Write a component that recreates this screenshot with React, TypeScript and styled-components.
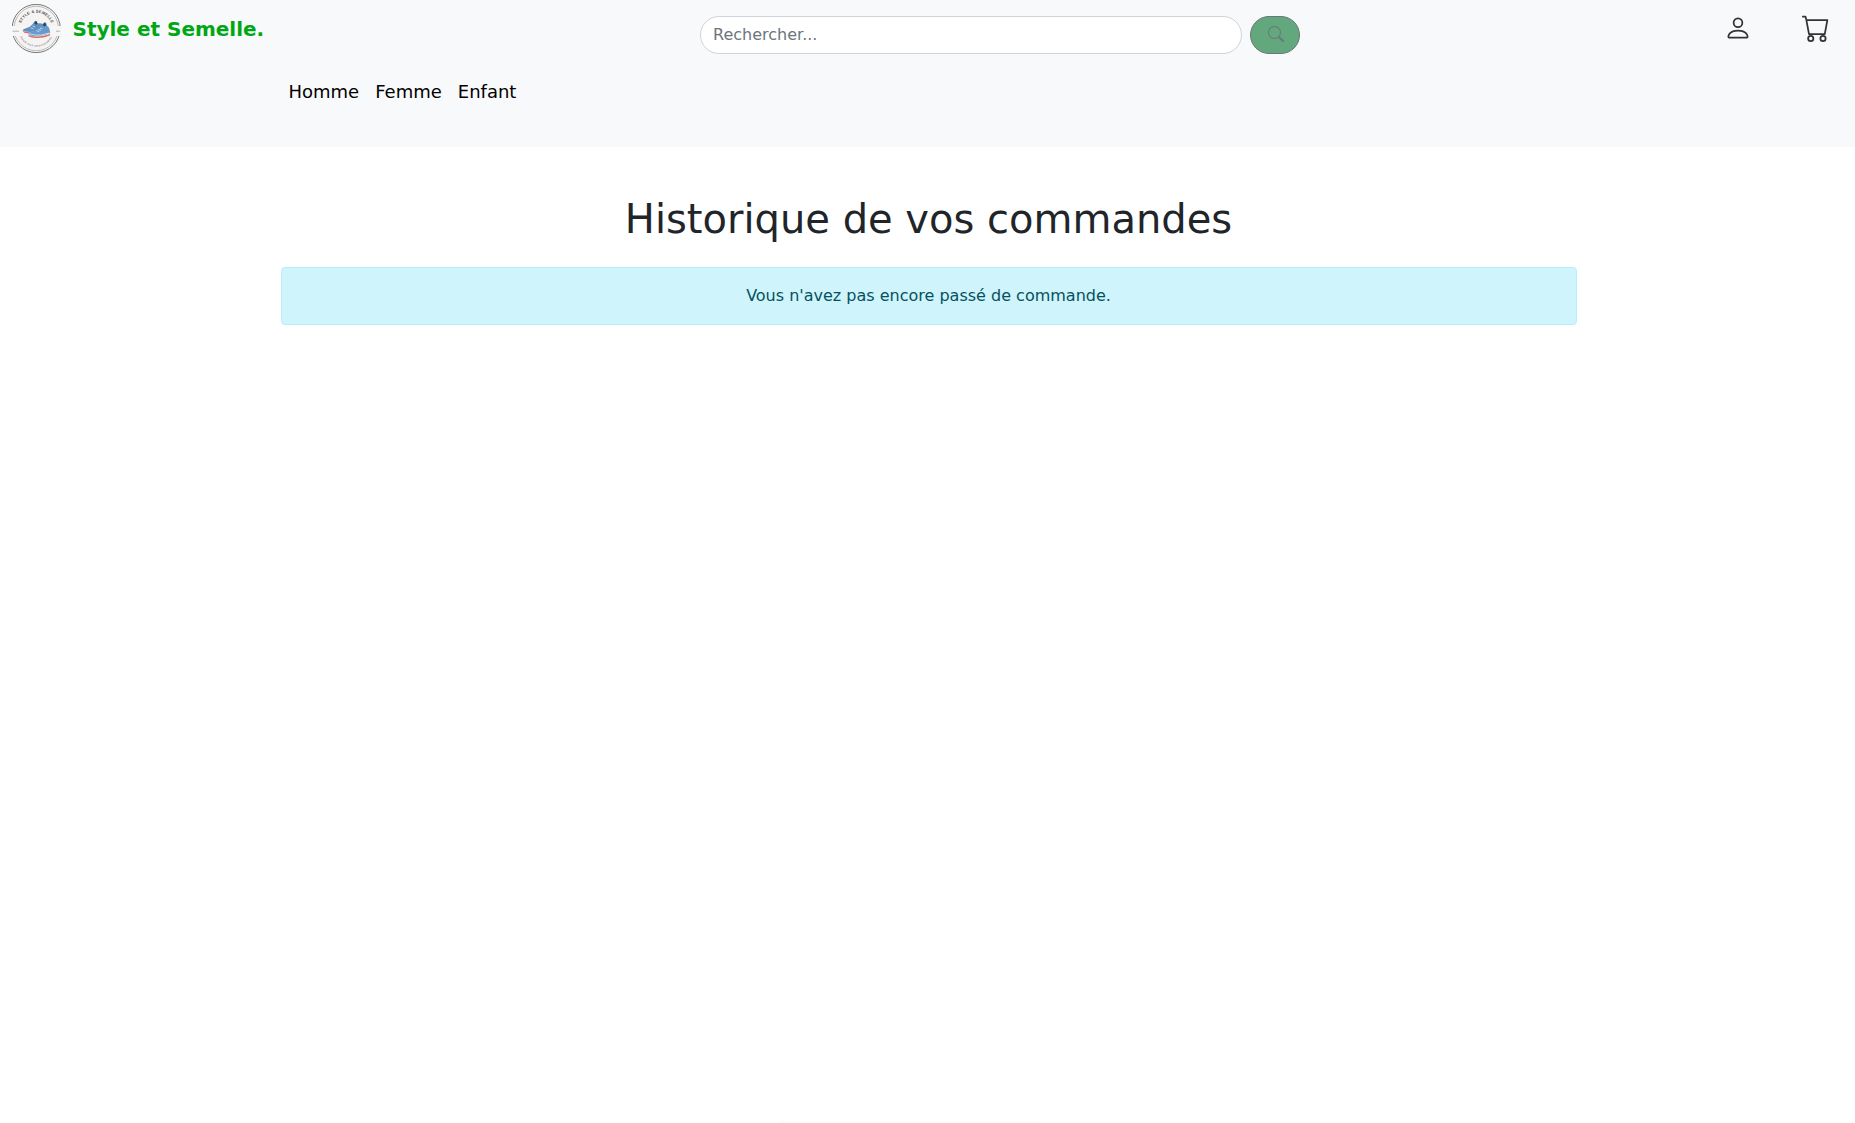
import React from "react";
import styled, { createGlobalStyle } from "styled-components";
import { BsCart, BsPerson, BsSearch } from "react-icons/bs";

const GlobalStyle = createGlobalStyle`
  *, *::before, *::after { box-sizing: border-box; }
  html, body, #root { height: 100%; }
  body {
    margin: 0;
    background: #fff;
    color: #212529;
    font-family: "DejaVu Sans", sans-serif;
    font-size: 16px;
    line-height: 1.5;
    overflow: hidden;
  }
`;

const Page = styled.div`
  display: flex;
  flex-direction: column;
  height: 100%;
`;

const Header = styled.header`
  display: flex;
  flex-direction: column;
  flex: none;
  height: 147px;
  background: #f8f9fb;
`;

const TopBar = styled.div`
  display: grid;
  grid-template-columns: 688px 600px 1fr;
  height: 70px;
  padding: 0 25.4px 0 12px;
`;

const Brand = styled.a`
  display: flex;
  align-items: center;
  align-self: start;
  gap: 10.5px;
  height: 58px;
  color: #00a713;
  font-size: 20px;
  font-weight: 700;
  text-decoration: none;
`;

const LogoMark = styled.svg`
  display: block;
  width: 50px;
  height: 50px;
`;

const Search = styled.form`
  display: flex;
  align-self: start;
  gap: 8px;
  width: 600px;
  height: 38px;
  margin-top: 16px;
`;

const SearchInput = styled.input`
  width: 542px;
  padding: 6px 12px;
  border: 1px solid #ced4da;
  border-radius: 20px;
  background: #fff;
  font: inherit;
  &::placeholder { color: #6c757d; opacity: 1; }
`;

const SearchButton = styled.button`
  display: flex;
  align-items: center;
  justify-content: center;
  width: 50px;
  padding: 0 0 3px 2px;
  border: 1px solid #6c757d;
  border-radius: 20px;
  background: #62a87c;
  color: #6c757d;
  font-size: 16px;
`;

const Actions = styled.div`
  display: flex;
  justify-content: flex-end;
  gap: 50px;
  padding-top: 14.4px;
`;

const ActionLink = styled.a`
  display: flex;
  width: 28px;
  height: 28px;
  color: #333;
  font-size: 28px;
`;

const Nav = styled.nav`
  display: flex;
  gap: 16px;
  padding: 8px 0 0 288.5px;
  font-size: 18px;
`;

const NavLink = styled.a`
  color: #000;
  text-decoration: none;
`;

const Main = styled.main`
  display: flex;
  flex: 1;
  flex-direction: column;
  width: 1296px;
  margin-left: 280.5px;
  padding-top: 48px;
  text-align: center;
`;

const Title = styled.h1`
  margin: 0 0 24px;
  font-size: 40px;
  font-weight: 500;
  line-height: 48px;
`;

const InfoAlert = styled.div`
  padding: 16px;
  border: 1px solid #b6effb;
  border-radius: 4px;
  background: #cff4fc;
  color: #055160;
`;

const BottomEdge = styled.div`
  width: 261px;
  height: 2px;
  margin: auto 0 0 498.5px;
  background: #fcfcfc;
`;

function Logo() {
  return (
    <LogoMark viewBox="0 0 50 50" role="img" aria-label="Style & Semelle">
      <circle cx="24.2" cy="24.5" r="24.1" fill="#f5f4f2" stroke="#55555a" strokeWidth="0.8" />
      <circle cx="24.2" cy="24.5" r="22.2" fill="none" stroke="#77777b" strokeWidth="0.45" />
      <rect x="-1" y="22" width="52" height="10" fill="#f7f6f4" />
      <path d="M0.5 27.2h6.5M44 27.2h4" stroke="#99999b" strokeWidth="0.7" />
      <defs>
        <path id="logo-top" d="M8.3 24.5A15.9 15.9 0 0 1 40.1 24.5" />
        <path id="logo-bottom" d="M5.9 24.5A18.3 18.3 0 0 0 42.5 24.5" />
      </defs>
      <text fontFamily="Liberation Sans, sans-serif" fontWeight="700" fontSize="4" letterSpacing="0.15" fill="#4b4b4f" textAnchor="middle">
        <textPath href="#logo-top" startOffset="50%">STYLE &amp; SEMELLE</textPath>
      </text>
      <text fontFamily="Liberation Sans, sans-serif" fontSize="2.5" letterSpacing="0.4" fill="#88888a" textAnchor="middle">
        <textPath href="#logo-bottom" startOffset="50%">POUR VOS CHAUSSURES</textPath>
      </text>
      <path d="M10.6 27l7 1.2-.4 1.3-5-.8z" fill="#e4696d" />
      <path d="M10.4 26.6q.4-1.600 4-2.600 5-1.200 8-6.600 1-1 2 0l1.300 2.100q3.300-.5 5.300.5l1 5-13 3q-4.500.3-8.600-1.400z" fill="#5f92c3" />
      <path d="M23.300 17.200q1-.7 1.600.5l.8 2.400-1.600.6-2-1.500z" fill="#35455e" />
      <path d="M16.300 31q4.500 1.700 9.500 1.500 6-.3 12.400-2.500l-.2 1.600q-6.500 2.600-13 2.500-4.500 0-8.400-1.700z" fill="#e4696d" />
      <path d="M16.400 30.800q-.4-2 3-3 5.500-1.400 9.600-5.300l3.400-4.200q1.300-.4 1.900 1l.9 2.700q2.300.6 3 7-6 3.200-13 3.300-5.300 0-8.800-1.500z" fill="#689bcb" />
      <path d="M31.800 19.200q1.300-.9 1.900.6l.5 1.800-2 .8-1.600-1.300z" fill="#35455e" />
      <path d="M16.400 30.300q3.200-.9 6 .7 6.500 1.200 14.800-2" fill="none" stroke="#d9e5f0" strokeWidth="0.9" />
      <path d="M18.500 23.800l3 1M20.500 22l2.500 1M24.300 26.500l3 1.300M26.200 25.300l2.600 1.200M28 24l2.500 1" fill="none" stroke="#dce8f3" strokeWidth="0.7" />
    </LogoMark>
  );
}

export default function App() {
  return (
    <>
      <GlobalStyle />
      <Page>
        <Header>
          <TopBar>
            <Brand>
              <Logo />
              <span>Style et Semelle.</span>
            </Brand>
            <Search onSubmit={(event: React.FormEvent) => event.preventDefault()}>
              <SearchInput type="search" placeholder="Rechercher..." />
              <SearchButton type="submit" aria-label="Rechercher"><BsSearch /></SearchButton>
            </Search>
            <Actions>
              <ActionLink aria-label="Compte"><BsPerson /></ActionLink>
              <ActionLink aria-label="Panier"><BsCart /></ActionLink>
            </Actions>
          </TopBar>
          <Nav>
            <NavLink>Homme</NavLink>
            <NavLink>Femme</NavLink>
            <NavLink>Enfant</NavLink>
          </Nav>
        </Header>
        <Main>
          <Title>Historique de vos commandes</Title>
          <InfoAlert role="alert">Vous n'avez pas encore passé de commande.</InfoAlert>
          <BottomEdge />
        </Main>
      </Page>
    </>
  );
}
